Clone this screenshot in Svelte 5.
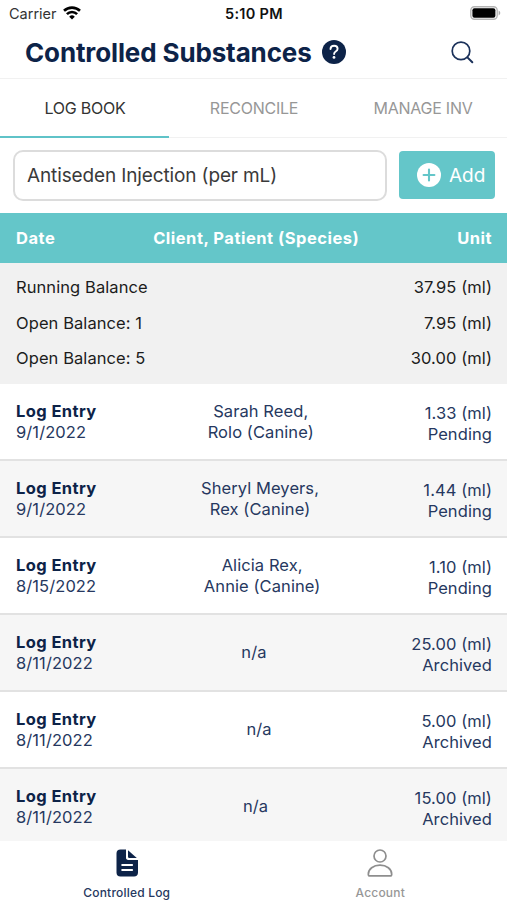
<script lang="ts">
	type Balance = {
		label: string;
		amount: string;
	};

	type Entry = {
		date: string;
		client: string;
		patient?: string;
		amount: string;
		status: string;
	};

	const tabs = ['LOG BOOK', 'RECONCILE', 'MANAGE INV'];

	const balances: Balance[] = [
		{ label: 'Running Balance', amount: '37.95' },
		{ label: 'Open Balance: 1', amount: '7.95' },
		{ label: 'Open Balance: 5', amount: '30.00' }
	];

	const entries: Entry[] = [
		{ date: '9/1/2022', client: 'Sarah Reed,', patient: 'Rolo (Canine)', amount: '1.33', status: 'Pending' },
		{ date: '9/1/2022', client: 'Sheryl Meyers,', patient: 'Rex (Canine)', amount: '1.44', status: 'Pending' },
		{ date: '8/15/2022', client: 'Alicia Rex,', patient: 'Annie (Canine)', amount: '1.10', status: 'Pending' },
		{ date: '8/11/2022', client: 'n/a', amount: '25.00', status: 'Archived' },
		{ date: '8/11/2022', client: 'n/a', amount: '5.00', status: 'Archived' },
		{ date: '8/11/2022', client: 'n/a', amount: '15.00', status: 'Archived' }
	];

	let activeTab = 'LOG BOOK';
</script>

<div class="screen">
	<div class="status-bar">
		<div class="carrier">
			<span>Carrier</span>
			<svg width="18" height="14" viewBox="0 0 18 14" fill="none" stroke="#000" stroke-width="2.6">
				<path d="M1 4.8a11.6 11.6 0 0 1 16 0" />
				<path d="M3.9 8.1a7.2 7.2 0 0 1 10.200 0" />
				<path d="M9 13.600 6.200 10.700a4 4 0 0 1 5.600 0z" fill="#000" stroke="none" />
			</svg>
		</div>
		<div class="clock">5:10 PM</div>
		<svg class="battery" width="31" height="14" viewBox="0 0 31 14">
			<rect x="0.8" y="0.8" width="26.4" height="12.4" rx="3.6" fill="#fff" stroke="#b4b4b4" stroke-width="1.4" />
			<rect x="2.4" y="2.3" width="23" height="9.4" rx="2" fill="#000" />
			<path d="M28.6 4.6c2.2.8 2.2 4 0 4.8z" fill="#aaa" />
		</svg>
	</div>

	<header class="title-bar">
		<h1>Controlled Substances</h1>
		<svg class="help" width="24" height="24" viewBox="0 0 24 24">
			<circle cx="12" cy="12" r="12" fill="#0d2348" />
			<path d="M8.5 9c.1-2.1 1.5-3.3 3.6-3.3 2 0 3.5 1.2 3.5 3 0 1.4-.8 2.1-1.9 2.8-1.1.7-1.6 1.2-1.6 2.5" fill="none" stroke="#fff" stroke-width="1.9" stroke-linecap="round" />
			<circle cx="12" cy="17.4" r="1.4" fill="#fff" />
		</svg>
		<svg class="search" width="23" height="23" viewBox="0 0 23 23" fill="none" stroke="#1b315a" stroke-linecap="round">
			<circle cx="10" cy="9.900" r="8.800" stroke-width="1.7" />
			<path d="M16.4 16.4l4.900 4.900" stroke-width="2" />
		</svg>
	</header>

	<nav class="tabs">
		{#each tabs as tab}
			<button class:active={tab === activeTab} on:click={() => (activeTab = tab)}>{tab}</button>
		{/each}
	</nav>

	<div class="picker">
		<div class="drug">Antiseden Injection (per mL)</div>
		<button class="add">
			<svg width="24" height="24" viewBox="0 0 24 24">
				<circle cx="12" cy="12" r="12" fill="#fff" />
				<path d="M12 6.6v10.8M6.6 12h10.8" stroke="#64c6c9" stroke-width="2.1" stroke-linecap="round" />
			</svg>
			<span>Add</span>
		</button>
	</div>

	<div class="table-head">
		<span>Date</span>
		<span>Client, Patient (Species)</span>
		<span>Unit</span>
	</div>

	<div class="balances">
		{#each balances as balance}
			<div class="balance">
				<span>{balance.label}</span>
				<span>{balance.amount} (ml)</span>
			</div>
		{/each}
	</div>

	<main class="entries">
		{#each entries as entry}
			<div class="entry">
				<div>
					<div class="entry-title">Log Entry</div>
					<div>{entry.date}</div>
				</div>
				<div class="client">
					<div>{entry.client}</div>
					{#if entry.patient}
						<div>{entry.patient}</div>
					{/if}
				</div>
				<div class="unit">
					<div>{entry.amount} (ml)</div>
					<div>{entry.status}</div>
				</div>
			</div>
		{/each}
	</main>

	<footer class="tab-bar">
		<div class="tab-item current">
			<svg width="22" height="28" viewBox="0 0 22 28">
				<path d="M4.5.5H10v8.2c0 1.4.8 2.2 2.2 2.2H22v12.6c0 2.6-1.4 4-4 4H4.5c-2.6 0-4-1.4-4-4v-19c0-2.600 1.400-4 4-4z" fill="#0d2348" />
				<path d="M12 1.200v6.600c0 .8.3 1.100 1.100 1.100h7.700z" fill="#0d2348" />
				<path d="M6.2 15.900h9.900M6.200 21h9.900" stroke="#fff" stroke-width="2" stroke-linecap="round" />
			</svg>
			<span>Controlled Log</span>
		</div>
		<div class="tab-item">
			<svg width="26" height="28" viewBox="0 0 26 28" fill="none" stroke="#8e8e8e" stroke-width="1.7">
				<circle cx="13" cy="7" r="6" />
				<path d="M1.300 25.200c0-5.100 5-9 11.700-9s11.700 3.900 11.700 9c0 1.200-.5 1.700-1.600 1.700H2.900c-1.100 0-1.600-.5-1.600-1.700z" />
			</svg>
			<span>Account</span>
		</div>
	</footer>
</div>

<style>
	:global(body) {
		margin: 0;
		background: #fff;
	}

	.screen {
		display: flex;
		flex-direction: column;
		width: 507px;
		height: 900px;
		overflow: hidden;
		font-family: Inter, 'Liberation Sans', sans-serif;
		font-size: 16.5px;
		letter-spacing: 0.08px;
		color: #0d2348;
		background: #fff;
	}

	button {
		border: 0;
		padding: 0;
		background: none;
		font: inherit;
		color: inherit;
	}

	svg {
		flex: none;
		display: block;
	}

	.status-bar {
		display: grid;
		grid-template-columns: 1fr auto 1fr;
		align-items: center;
		height: 27px;
		padding: 0 6px 0 9px;
		box-sizing: border-box;
		font-size: 14.5px;
		color: #111;
	}

	.carrier {
		display: flex;
		align-items: center;
		gap: 6px;
		letter-spacing: 0;
		color: #333;
	}

	.carrier svg {
		margin-top: -2px;
	}

	.clock {
		margin-right: 2px;
		font-weight: 600;
		letter-spacing: 0.3px;
	}

	.battery {
		justify-self: end;
		margin-top: -1px;
	}

	.title-bar {
		display: flex;
		align-items: center;
		height: 52px;
		padding: 0 33px 1px 25px;
		box-sizing: border-box;
		border-bottom: 1px solid #f1f1f1;
	}

	h1 {
		margin: 0;
		font-size: 26px;
		font-weight: 700;
		letter-spacing: -0.13px;
		white-space: nowrap;
	}

	.help {
		margin-left: 10px;
	}

	.search {
		margin-left: auto;
	}

	.tabs {
		display: grid;
		grid-template-columns: repeat(3, 1fr);
		height: 59px;
	}

	.tabs button {
		padding-left: 1px;
		border-bottom: 1px solid #f1f1f1;
		font-size: 16px;
		letter-spacing: -0.25px;
		color: #979797;
	}

	.tabs .active {
		border-bottom: 2px solid #5fc3c8;
		color: #333;
	}

	.picker {
		display: flex;
		align-items: center;
		gap: 12px;
		height: 75px;
		padding: 0 12px 1px 13px;
		box-sizing: border-box;
	}

	.drug {
		flex: 1;
		height: 51px;
		padding-left: 12px;
		box-sizing: border-box;
		border: 2px solid #dcdcdc;
		border-radius: 10px;
		font-size: 19px;
		letter-spacing: -0.13px;
		line-height: 47px;
		color: #3a3a3a;
		white-space: nowrap;
	}

	.add {
		display: flex;
		align-items: center;
		gap: 8px;
		width: 96px;
		height: 48px;
		padding-left: 18px;
		border-radius: 4px;
		background: #64c6c9;
		font-size: 19px;
		letter-spacing: 0;
		color: #fff;
	}

	.table-head {
		display: flex;
		align-items: center;
		justify-content: space-between;
		height: 50px;
		padding: 0 15px 0 16px;
		background: #64c6c9;
		font-weight: 700;
		letter-spacing: 0.5px;
		color: #fff;
	}

	.balances {
		height: 121px;
		padding: 7px 15px 7px 16px;
		box-sizing: border-box;
		background: #f1f1f1;
		color: #1c1c1c;
	}

	.balance {
		display: flex;
		justify-content: space-between;
		line-height: 35.5px;
	}

	.entries {
		flex: 1;
		min-height: 0;
		overflow: hidden;
	}

	.entry {
		display: flex;
		align-items: center;
		justify-content: space-between;
		height: 77px;
		padding: 0 15px 0 16px;
		box-sizing: border-box;
		border-bottom: 2px solid #e2e2e2;
		line-height: 21px;
		color: #263860;
	}

	.entry:nth-child(even) {
		background: #f6f6f6;
	}

	.entry-title {
		font-weight: 700;
		letter-spacing: 0.4px;
		color: #0d2348;
	}

	.client {
		text-align: center;
	}

	.unit {
		padding-top: 5px;
		text-align: right;
	}

	.tab-bar {
		display: grid;
		grid-template-columns: repeat(2, 1fr);
		height: 59px;
		background: #fff;
	}

	.tab-item {
		display: flex;
		flex-direction: column;
		align-items: center;
		gap: 8px;
		padding-top: 8px;
		font-size: 12px;
		font-weight: 500;
		letter-spacing: 0.2px;
		line-height: 16px;
		color: #979797;
	}

	.current {
		color: #263860;
	}
</style>
